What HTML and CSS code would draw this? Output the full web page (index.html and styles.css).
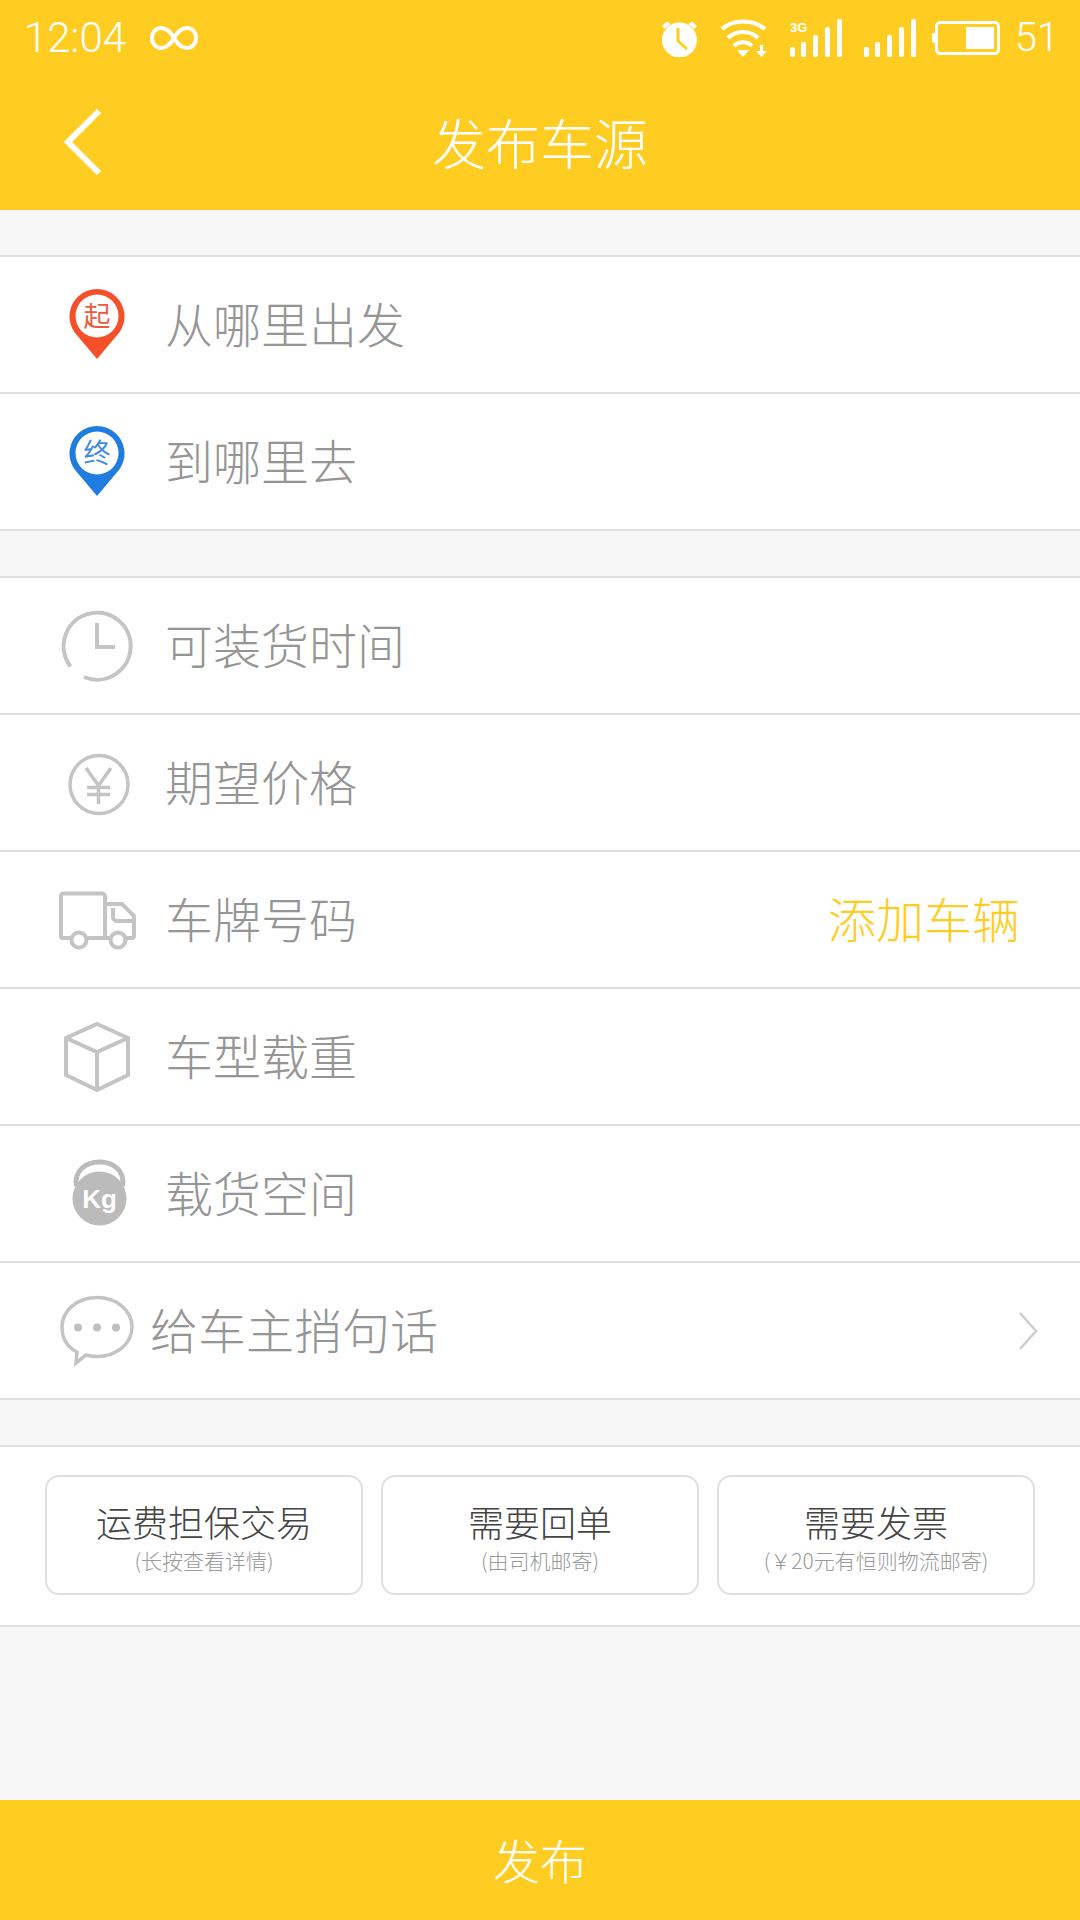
FILE: index.html
```html
<!DOCTYPE html>
<html lang="zh-CN">

<head>
  <meta charset="UTF-8">
  <meta name="viewport" content="width=device-width, initial-scale=1.0">
  <title>发布车源</title>
  <link rel="stylesheet" href="styles.css">
</head>

<body>
  <header class="top">
    <div class="status-bar">
      <span class="status-time">12:04</span>
      <svg class="infinity" width="48" height="28" viewBox="0 0 48 28">
        <path d="M24 14C20 7 16 4 11 4 5.500 4 2 8.500 2 14s3.500 10 9 10c5 0 9-3 13-10s8-10 13-10c5.500 0 9 4.500 9 10s-3.500 10-9 10c-5 0-9-3-13-10z" />
      </svg>
      <div class="status-icons">
        <svg class="alarm" width="37" height="38" viewBox="0 0 37 38">
          <circle class="fill" cx="18.500" cy="21" r="17.500" />
          <path class="fill" d="M1 7 6 2.500 9.500 5 3.500 10zM36 7 31 2.500 27.500 5 33.500 10z" />
          <path class="hand" d="M17 9V22L26 30" />
        </svg>
        <svg class="wifi" width="47" height="38" viewBox="0 0 47 38">
          <path class="arc" d="M2 10C13 0 33 0 45 10" />
          <path class="arc" d="M8 19C16 11 30 11 38 19" />
          <path class="arc" d="M14 27C19 22 27 22 32 27" />
          <path class="fill" d="M17 31H29L23 38z" />
          <path class="fill" d="M40 26H43V32H47L41.500 38 36 32H40z" />
        </svg>
        <svg class="signal" width="53" height="38" viewBox="0 0 53 38">
          <text class="net" x="0" y="13">3G</text>
          <rect class="fill" x="0" y="28" width="5" height="10" rx="2" />
          <rect class="fill" x="11" y="23" width="5" height="15" rx="2" />
          <rect class="fill" x="23" y="16" width="5" height="22" rx="2" />
          <rect class="fill" x="35" y="8" width="5" height="30" rx="2" />
          <rect class="fill" x="47" y="0" width="5" height="38" rx="2" />
        </svg>
        <svg class="signal signal-second" width="53" height="38" viewBox="0 0 53 38">
          <rect class="fill" x="0" y="28" width="5" height="10" rx="2" />
          <rect class="fill" x="11" y="23" width="5" height="15" rx="2" />
          <rect class="fill" x="23" y="16" width="5" height="22" rx="2" />
          <rect class="fill" x="35" y="8" width="5" height="30" rx="2" />
          <rect class="fill" x="47" y="0" width="5" height="38" rx="2" />
        </svg>
        <svg class="battery" width="68" height="34" viewBox="0 0 68 34">
          <rect class="fill" x="0" y="12" width="4" height="10" rx="2" />
          <rect class="outline" x="4.500" y="1.500" width="62" height="31" rx="4" />
          <rect class="fill" x="34" y="6" width="28" height="22" />
        </svg>
        <span class="status-level">51</span>
      </div>
    </div>
    <div class="nav-bar">
      <svg class="back" width="38" height="68" viewBox="0 0 38 68">
        <path d="M35 3 4 34 35 65" />
      </svg>
      <h1 class="nav-title">发布车源</h1>
      <span></span>
    </div>
  </header>

  <main class="content">
    <section class="group">
      <div class="row">
        <svg class="row-icon" width="80" height="80" viewBox="0 0 80 80">
          <path class="pin-red" d="M40 74 17.500 47.300A27.500 27.500 0 1 1 62.500 47.300z" />
          <circle class="pin-hole" cx="40" cy="31" r="21.500" />
          <text class="pin-text pin-text-red" x="40" y="40.500">起</text>
        </svg>
        <span class="row-label">从哪里出发</span>
      </div>
      <div class="row">
        <svg class="row-icon" width="80" height="80" viewBox="0 0 80 80">
          <path class="pin-blue" d="M40 74 17.500 47.300A27.500 27.500 0 1 1 62.500 47.300z" />
          <circle class="pin-hole" cx="40" cy="31" r="21.500" />
          <text class="pin-text pin-text-blue" x="40" y="40.500">终</text>
        </svg>
        <span class="row-label">到哪里去</span>
      </div>
    </section>

    <section class="group">
      <div class="row">
        <svg class="row-icon line-icon" width="80" height="80" viewBox="0 0 80 80">
          <path d="M27 71A33.500 33.500 0 1 0 13.500 60.500" />
          <path d="M40 17V41H58" />
        </svg>
        <span class="row-label">可装货时间</span>
      </div>
      <div class="row">
        <svg class="row-icon line-icon thin" width="80" height="80" viewBox="0 0 80 80">
          <circle cx="42" cy="41.500" r="29" />
          <path d="M29 25 41.500 42.500 54 25M41.500 42.500V61M30 44.500H53M30 51.500H53" />
        </svg>
        <span class="row-label">期望价格</span>
      </div>
      <div class="row">
        <svg class="row-icon line-icon" width="80" height="80" viewBox="0 0 80 80">
          <path d="M14 58H6A2 2 0 0 1 4 56V16A2.500 2.500 0 0 1 6.500 13.500H45A3 3 0 0 1 48 16.500V58H30" />
          <path d="M48 24H65L77 36V56A2 2 0 0 1 75 58H69M53 58H48" />
          <path d="M77 41H60A4 4 0 0 1 56 37V28" />
          <circle cx="22" cy="60" r="7.500" />
          <circle cx="61" cy="60" r="7.500" />
        </svg>
        <span class="row-label">车牌号码</span>
        <span class="row-action">添加车辆</span>
      </div>
      <div class="row">
        <svg class="row-icon line-icon" width="80" height="80" viewBox="0 0 80 80">
          <path d="M40 7 71 21V58L40 73 9 58V21z" />
          <path d="M9 21 40 35 71 21M40 35V73" />
        </svg>
        <span class="row-label">车型载重</span>
      </div>
      <div class="row">
        <svg class="row-icon" width="80" height="80" viewBox="0 0 80 80">
          <path class="kg-handle" d="M19.500 32C14 0 71 0 65.500 32" />
          <circle class="kg-body" cx="42.500" cy="44.500" r="27" />
          <text class="kg-text" x="42.500" y="53.500">Kg</text>
        </svg>
        <span class="row-label">载货空间</span>
      </div>
      <div class="row">
        <svg class="row-icon line-icon thin" width="80" height="80" viewBox="0 0 80 80">
          <path d="M20 61C10 56 5 47 5 36 5 19 21 6.500 40 6.500S75 19 75 36 59 65.500 40 65.500C36 65.500 32 65 29 64L19 72z" />
          <circle class="dot" cx="21" cy="36.500" r="4" />
          <circle class="dot" cx="40" cy="36.500" r="4" />
          <circle class="dot" cx="59" cy="36.500" r="4" />
        </svg>
        <span class="row-label row-label-tight">给车主捎句话</span>
        <svg class="row-arrow" width="20" height="40" viewBox="0 0 20 40">
          <path d="M2 2 18 20 2 38" />
        </svg>
      </div>
    </section>

    <section class="group options">
      <div class="option">
        <span class="option-title">运费担保交易</span>
        <span class="option-note">(长按查看详情)</span>
      </div>
      <div class="option">
        <span class="option-title">需要回单</span>
        <span class="option-note">(由司机邮寄)</span>
      </div>
      <div class="option">
        <span class="option-title">需要发票</span>
        <span class="option-note">(￥20元有恒则物流邮寄)</span>
      </div>
    </section>
  </main>

  <footer class="publish">发布</footer>
</body>

</html>
```

FILE: styles.css
```css
body {
  display: flex;
  flex-direction: column;
  width: 1080px;
  height: 1920px;
  margin: 0;
  overflow: hidden;
  background-color: #f7f7f7;
  font-family: "Noto Sans CJK SC", "Noto Sans", sans-serif;
  font-weight: 300;
}

.top {
  background-color: #ffcd22;
  color: #fff;
}

.status-bar {
  display: flex;
  align-items: center;
  box-sizing: border-box;
  height: 74px;
  padding: 2px 21px 0 24px;
}

.status-time,
.status-level {
  font-family: Roboto, sans-serif;
  font-size: 40px;
  font-weight: 300;
  line-height: 1;
}

.status-time {
  font-size: 42px;
}

.infinity {
  margin-left: 24px;
  fill: none;
  stroke: #fff;
  stroke-width: 4;
}

.status-icons {
  display: flex;
  align-items: center;
  margin-left: auto;
}

.fill {
  fill: #fff;
}

.outline {
  fill: none;
  stroke: #fff;
  stroke-width: 3;
}

.arc {
  fill: none;
  stroke: #fff;
  stroke-width: 4;
}

.hand {
  fill: none;
  stroke: #ffcd22;
  stroke-width: 3;
}

.net {
  fill: #fff;
  font-family: "Liberation Sans", sans-serif;
  font-size: 13px;
  font-weight: 700;
}

.wifi {
  margin-left: 22px;
}

.signal {
  margin-left: 23px;
}

.signal-second {
  margin-left: 21px;
}

.battery {
  margin-left: 15px;
}

.status-level {
  margin-left: 15px;
}

.nav-bar {
  display: grid;
  grid-template-columns: 1fr auto 1fr;
  align-items: center;
  height: 136px;
  padding: 0 64px;
}

.back {
  fill: none;
  stroke: #fff;
  stroke-width: 6;
}

.nav-title {
  margin: 0;
  font-size: 54px;
  font-weight: 300;
  line-height: 1.2;
}

.content {
  flex: 1;
}

.group {
  margin-top: 45px;
  border-top: 2px solid #e0e0e0;
  background-color: #fff;
}

.row {
  display: flex;
  align-items: center;
  height: 135px;
  padding: 0 60px 0 57px;
  border-bottom: 2px solid #e0e0e0;
}

.row-label {
  margin: 0 0 4px 28px;
  color: #959595;
  font-size: 48px;
  line-height: 1.2;
}

.row-label-tight {
  margin-left: 13px;
}

.row-action {
  margin: 0 0 4px auto;
  color: #ffcd22;
  font-size: 48px;
  line-height: 1.2;
}

.row-arrow {
  margin: 0 -18px 0 auto;
  fill: none;
  stroke: #ccc;
  stroke-width: 2.500;
}

.pin-red {
  fill: #f5502a;
}

.pin-blue {
  fill: #1f7de0;
}

.pin-hole {
  fill: #fff;
}

.pin-text {
  font-size: 27px;
  font-weight: 400;
  text-anchor: middle;
}

.pin-text-red {
  fill: #ee5a3c;
}

.pin-text-blue {
  fill: #3f8be4;
}

.line-icon {
  fill: none;
  stroke: #c4c4c4;
  stroke-width: 4;
}

.line-icon.thin {
  stroke-width: 3.500;
}

.line-icon .dot {
  fill: #c0c0c0;
  stroke: none;
}

.kg-handle {
  fill: none;
  stroke: #bbb;
  stroke-width: 5;
}

.kg-body {
  fill: #bbb;
}

.kg-text {
  fill: #fff;
  font-family: "Liberation Sans", sans-serif;
  font-size: 26px;
  font-weight: 700;
  text-anchor: middle;
}

.options {
  display: grid;
  grid-template-columns: repeat(3, 1fr);
  gap: 18px;
  padding: 28px 45px 30px;
  border-bottom: 2px solid #e0e0e0;
}

.option {
  display: flex;
  flex-direction: column;
  align-items: center;
  justify-content: center;
  height: 120px;
  box-sizing: border-box;
  padding-top: 3px;
  border: 2px solid #e0e0e0;
  border-radius: 14px;
}

.option-title {
  color: #444;
  font-size: 36px;
  line-height: 1.2;
}

.option-note {
  margin-top: 4px;
  color: #999;
  font-size: 21px;
  line-height: 1.2;
}

.publish {
  display: flex;
  align-items: center;
  justify-content: center;
  box-sizing: border-box;
  height: 120px;
  padding-bottom: 4px;
  background-color: #ffcd22;
  color: #fff;
  font-size: 47px;
}
```
